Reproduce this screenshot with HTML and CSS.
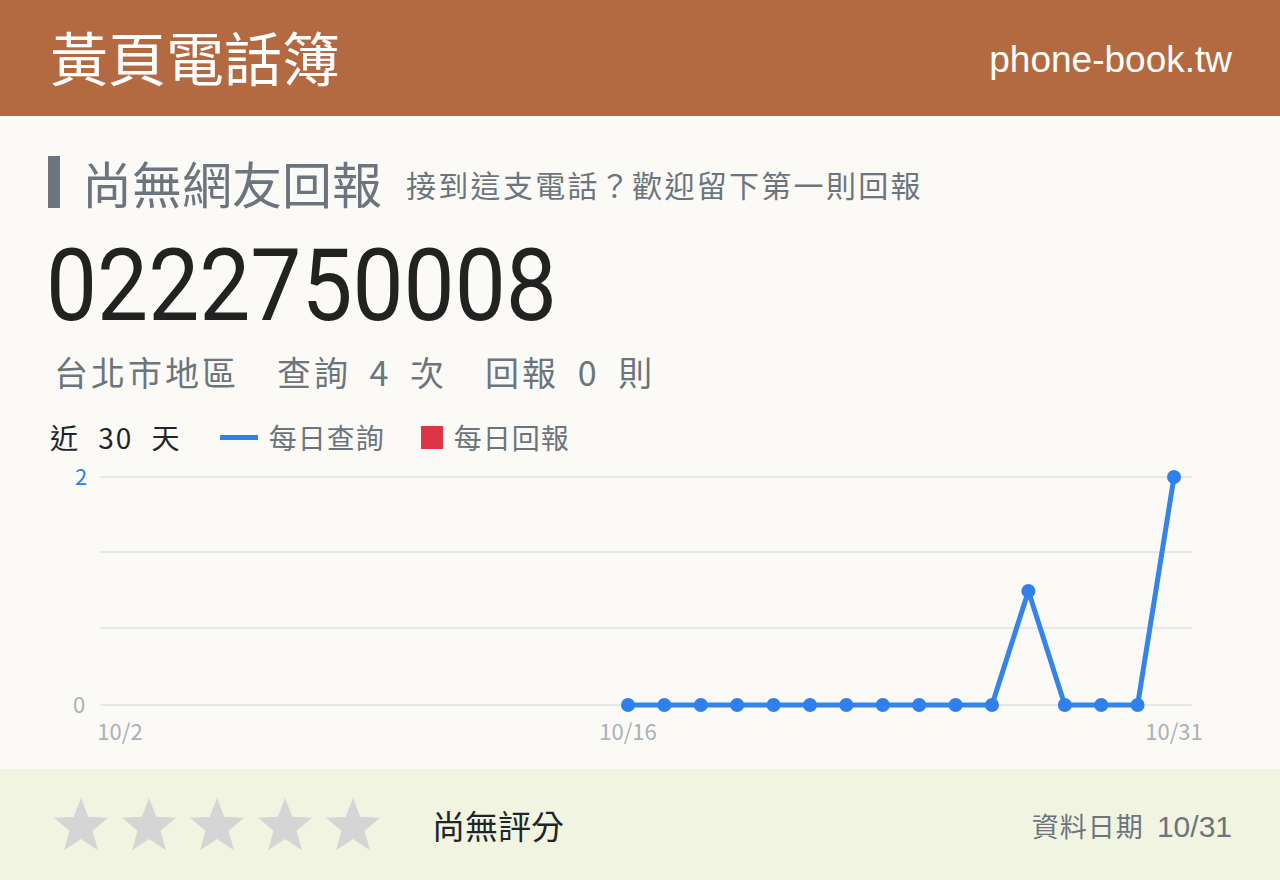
FILE: index.html
```html
<!DOCTYPE html>
<html lang="zh-Hant">
<head>
    <meta charset="UTF-8">
    <title>0222750008 - 黃頁電話簿</title>
    <link rel="stylesheet" href="styles.css">
</head>
<body>

    <header class="topbar">
        <div class="brand">黃頁電話簿</div>
        <div class="site">phone-book.tw</div>
    </header>

    <main class="content">
        <div class="title-row">
            <span class="title-bar"></span>
            <h1>尚無網友回報</h1>
            <span class="title-hint">接到這支電話？歡迎留下第一則回報</span>
        </div>

        <div class="number">0222750008</div>

        <div class="stats">
            <span>台北市地區</span>
            <span>查詢 4 次</span>
            <span>回報 0 則</span>
        </div>

        <div class="legend">
            <span class="range">近 30 天</span>
            <span class="key"><i class="key-line"></i>每日查詢</span>
            <span class="key"><i class="key-box"></i>每日回報</span>
        </div>

        <svg class="chart" width="1184" height="318" viewBox="0 0 1184 318">
            <g class="grid">
                <line x1="52" y1="26" x2="1144" y2="26"/>
                <line x1="52" y1="101" x2="1144" y2="101"/>
                <line x1="52" y1="177" x2="1144" y2="177"/>
                <line x1="52" y1="254" x2="1144" y2="254"/>
            </g>
            <text class="y-top" x="33" y="34" text-anchor="middle">2</text>
            <text class="y-zero" x="31" y="262" text-anchor="middle">0</text>
            <text class="x-label" x="72" y="289" text-anchor="middle">10/2</text>
            <text class="x-label" x="580" y="289" text-anchor="middle">10/16</text>
            <text class="x-label" x="1126" y="289" text-anchor="middle">10/31</text>
            <g id="series"></g>
        </svg>
    </main>

    <footer class="bottombar">
        <div class="stars">
            <svg viewBox="0 0 60 60"><polygon points="30,2 37.5,21.5 58,22.5 42,36 47.5,56 30,44.5 12.5,56 18,36 2,22.5 22.5,21.5"/></svg>
            <svg viewBox="0 0 60 60"><polygon points="30,2 37.5,21.5 58,22.5 42,36 47.5,56 30,44.5 12.5,56 18,36 2,22.5 22.5,21.5"/></svg>
            <svg viewBox="0 0 60 60"><polygon points="30,2 37.5,21.5 58,22.5 42,36 47.5,56 30,44.5 12.5,56 18,36 2,22.5 22.5,21.5"/></svg>
            <svg viewBox="0 0 60 60"><polygon points="30,2 37.5,21.5 58,22.5 42,36 47.5,56 30,44.5 12.5,56 18,36 2,22.5 22.5,21.5"/></svg>
            <svg viewBox="0 0 60 60"><polygon points="30,2 37.5,21.5 58,22.5 42,36 47.5,56 30,44.5 12.5,56 18,36 2,22.5 22.5,21.5"/></svg>
        </div>
        <div class="rating">尚無評分</div>
        <div class="updated">資料日期 <b>10/31</b></div>
    </footer>

    <script>
        // daily lookups for the last 30 days, starting 10/2
        const queries = [null, null, null, null, null, null, null, null, null, null, null, null, null, null,
                         0, 0, 0, 0, 0, 0, 0, 0, 0, 0, 0, 1, 0, 0, 0, 2];

        const chartLeft = 70.4;
        const chartStep = 36.4;
        const chartBottom = 254;
        const chartTop = 26;
        const maxVal = 2;

        function px(i) { return chartLeft + i * chartStep; }
        function py(v) { return chartBottom - (chartBottom - chartTop) * v / maxVal; }

        const ns = 'http://www.w3.org/2000/svg';
        const group = document.getElementById('series');
        let pts = [];
        queries.forEach(function (v, i) {
            if (v === null) return;
            pts.push(px(i).toFixed(1) + ',' + py(v).toFixed(1));
        });

        const line = document.createElementNS(ns, 'polyline');
        line.setAttribute('points', pts.join(' '));
        line.setAttribute('class', 'series-line');
        group.appendChild(line);

        queries.forEach(function (v, i) {
            if (v === null) return;
            const dot = document.createElementNS(ns, 'circle');
            dot.setAttribute('cx', px(i));
            dot.setAttribute('cy', py(v));
            dot.setAttribute('r', 7);
            dot.setAttribute('class', 'series-dot');
            group.appendChild(dot);
        });
    </script>

</body>
</html>
```

FILE: styles.css
```css
body {
    margin: 0;
    background-color: #fbfaf6;
    font-family: "Noto Sans CJK TC", "Noto Sans", sans-serif;
    color: #212529;
}

.topbar {
    height: 116px;
    background-color: #b46a40;
    color: #ffffff;
    display: flex;
    justify-content: space-between;
    align-items: center;
    padding: 0 48px 0 50px;
}

.brand {
    font-size: 58px;
    line-height: 1;
    margin-top: -4px;
}

.site {
    font-family: "Liberation Sans", Arial, sans-serif;
    font-size: 37px;
    margin-top: 4px;
}

.content {
    padding: 0 48px;
}

.title-row {
    display: flex;
    align-items: center;
    height: 60px;
    margin-top: 36px;
}

.title-row h1 {
    margin: 0 24px 0 22px;
    font-size: 50px;
    font-weight: normal;
    color: #6c757d;
    line-height: 1;
}

.title-bar {
    width: 12px;
    height: 52px;
    background-color: #6c757d;
}

.title-hint {
    font-size: 30px;
    letter-spacing: 2.3px;
    color: #6c757d;
    padding-top: 4px;
}

.number {
    font-family: Roboto, "Liberation Sans", sans-serif;
    font-size: 101px;
    line-height: 120px;
    height: 120px;
    margin-top: 14px;
    color: #222222;
    transform: scaleX(0.9);
    transform-origin: left center;
    margin-left: -2px;
}

.stats {
    display: flex;
    gap: 38px;
    height: 50px;
    align-items: center;
    padding-left: 6px;
    font-size: 34px;
    letter-spacing: 3px;
    word-spacing: 8px;
    color: #6c757d;
}

.legend {
    display: flex;
    align-items: center;
    height: 50px;
    margin-top: 16px;
    font-size: 28px;
}

.range {
    color: #212529;
    margin-right: 38px;
    padding-left: 2px;
    letter-spacing: 2px;
    word-spacing: 10px;
}

.key {
    display: flex;
    align-items: center;
    color: #6c757d;
    letter-spacing: 1px;
    margin-right: 36px;
}

.key-line {
    display: inline-block;
    width: 38px;
    height: 5px;
    background-color: #2f80ed;
    margin-right: 11px;
}

.key-box {
    display: inline-block;
    width: 22px;
    height: 23px;
    background-color: #dc3545;
    margin-right: 11px;
}

.chart {
    display: block;
    margin-top: -11px;
}

.grid line {
    stroke: #e6e8ec;
    stroke-width: 2;
}

.chart text {
    font-family: "Noto Sans CJK TC", sans-serif;
    font-size: 22px;
}

.y-top {
    fill: #2f80ed;
}

.y-zero,
.x-label {
    fill: #aab1b9;
}

.series-line {
    fill: none;
    stroke: #3584e9;
    stroke-width: 5;
    stroke-linejoin: round;
}

.series-dot {
    fill: #2f80ed;
}

.bottombar {
    height: 112px;
    background-color: #f2f4e2;
    display: flex;
    align-items: center;
    padding: 0 48px 0 52px;
}

.stars {
    display: flex;
    gap: 10px;
}

.stars svg {
    width: 58px;
    height: 58px;
    fill: #d5d5d5;
}

.rating {
    font-size: 33px;
    color: #212529;
    margin-left: 50px;
}

.updated {
    margin-left: auto;
    font-size: 27px;
    color: #6c757d;
    letter-spacing: 1px;
}

.updated b {
    font-weight: normal;
    font-family: "Liberation Sans", Arial, sans-serif;
    font-size: 30px;
    letter-spacing: 0;
    margin-left: 6px;
}
```
